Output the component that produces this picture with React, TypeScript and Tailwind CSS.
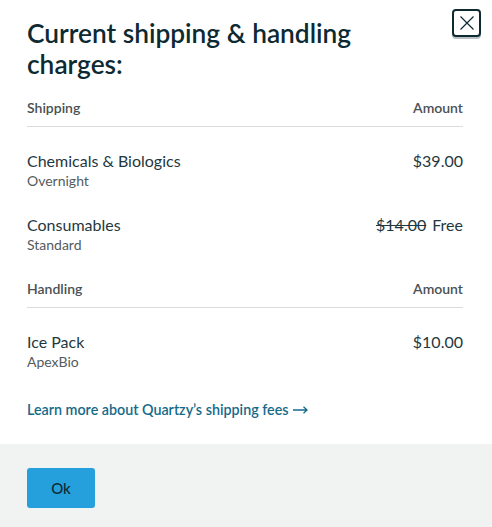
import React from "react";

function Row({ name, sub, amount }: { name: string; sub: string; amount: React.ReactNode }) {
  return (
    <div className="flex justify-between items-start">
      <div className="flex flex-col">
        <span className="text-[16px] leading-[20px] text-[#1f3840]">{name}</span>
        <span className="text-[14px] leading-[18px] mt-[1px] text-[#555b5e]">{sub}</span>
      </div>
      <div className="text-[16px] leading-[20px] text-[#1f3840]">{amount}</div>
    </div>
  );
}

function Header({ left }: { left: string }) {
  return (
    <div className="flex justify-between border-b border-[#d9dcdd] pb-[8px] text-[14px] leading-[20px] font-semibold text-[#4a5053]">
      <span>{left}</span>
      <span>Amount</span>
    </div>
  );
}

export default function App() {
  return (
    <div className="w-[492px] h-[527px] bg-white flex flex-col overflow-hidden" style={{ fontFamily: "Lato, 'Open Sans', sans-serif" }}>
      <div className="relative px-[27px] pr-[29px] pt-[18px] flex flex-col">
        <button className="absolute right-[11px] top-[9px] w-[29px] h-[28px] rounded-[4px] border-2 border-[#0d2a33] bg-white flex items-center justify-center shadow-[0_2px_0_#b8c0c3]">
          <svg width="16" height="16" viewBox="0 0 16 16" fill="none" stroke="#0d2a33" strokeWidth="1.2">
            <path d="M1.5 1.5 L14.5 14.5 M14.5 1.5 L1.5 14.5" />
          </svg>
        </button>
        <h1 className="text-[26.3px] leading-[31px] font-semibold text-[#0d2a33] max-w-[380px]">
          Current shipping &amp; handling charges:
        </h1>
        <div className="mt-[18px]">
          <Header left="Shipping" />
        </div>
        <div className="mt-[24px] flex flex-col gap-[25px]">
          <Row name="Chemicals & Biologics" sub="Overnight" amount="$39.00" />
          <Row
            name="Consumables"
            sub="Standard"
            amount={
              <span className="flex gap-[6px]">
                <span className="line-through">$14.00</span>
                <span>Free</span>
              </span>
            }
          />
        </div>
        <div className="mt-[25px]">
          <Header left="Handling" />
        </div>
        <div className="mt-[24px]">
          <Row name="Ice Pack" sub="ApexBio" amount="$10.00" />
        </div>
        <a className="mt-[29px] text-[14.3px] leading-[20px] font-semibold text-[#156a8a] flex items-center gap-[4px]">
          Learn more about Quartzy’s shipping fees
          <svg width="15" height="8" viewBox="0 0 15 8" fill="none" stroke="#156a8a" strokeWidth="1.3">
            <path d="M0 4 H14 M10.5 0.8 L14 4 L10.5 7.2" />
          </svg>
        </a>
      </div>
      <div className="mt-auto h-[83px] bg-[#f1f2f2] px-[27px] pt-[24px]">
        <button className="w-[68px] h-[40px] rounded-[3px] bg-[#26a0dc] text-[15px] font-medium text-[#0d2a33]">
          Ok
        </button>
      </div>
    </div>
  );
}
